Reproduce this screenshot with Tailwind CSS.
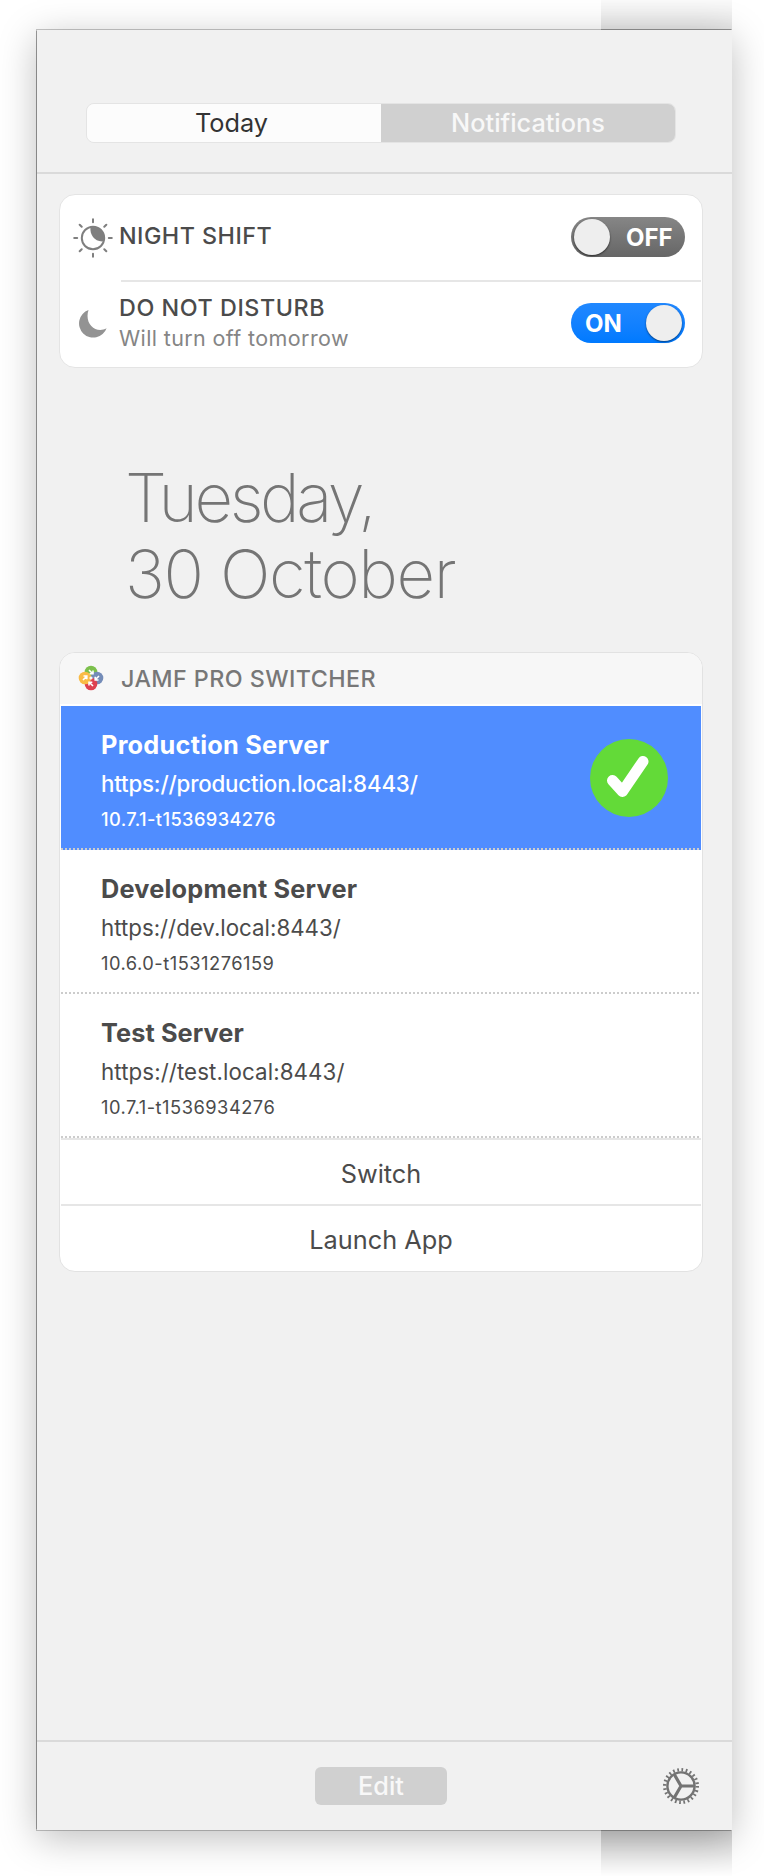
<!DOCTYPE html>
<html lang="en">
<head>
<meta charset="utf-8">
<title>Notification Center</title>
<script src="https://cdn.jsdelivr.net/npm/@tailwindcss/browser@4"></script>
</head>
<body class="bg-white">
<div class="relative w-[764px] h-[1876px] overflow-hidden pt-[30px] pl-[37px] font-['Inter',sans-serif] text-[#4b4b4b] whitespace-nowrap">
  <!-- shadow overlap above and below the panel -->
  <div class="absolute left-[601px] top-0 w-[131px] h-[30px] border-b border-black/25 bg-linear-to-b from-black/2 to-black/10"></div>
  <div class="absolute left-[601px] top-[1830px] w-[131px] h-[46px] border-t border-black/25 bg-linear-to-b from-black/18 to-black/0"></div>

  <main class="relative w-[695px] h-[1800px] bg-[#f1f1f1] flex flex-col shadow-[-1px_-1px_0_0_rgba(0,0,0,0.22),-1px_1px_0_0_rgba(0,0,0,0.22),0_8px_36px_rgba(0,0,0,0.26)]">
    <header class="h-[144px] shrink-0 border-b-2 border-[#dadada] pt-[73px] pl-[49px]">
      <div class="flex w-[590px] h-[40px] rounded-[8px] border border-[#e4e4e4] overflow-hidden text-[25.3px] leading-[37px]">
        <div class="w-[294px] bg-[#fcfcfc] text-center text-[#333] pr-[5px]">Today</div>
        <div class="flex-1 bg-[#d0d0d0] text-center text-[#f8f8f8] font-medium">Notifications</div>
      </div>
    </header>

    <section class="mt-[20px] ml-[22px] w-[644px] h-[174px] rounded-[16px] border border-[#e4e4e4] bg-white px-px">
      <div class="flex h-[85px]">
        <svg class="ml-[12px] mt-[23px] w-[40px] h-[40px]" viewBox="0 0 40 40" fill="none" stroke="#7f7f7f" stroke-width="2" stroke-linecap="round">
          <circle cx="20" cy="20" r="11.2"/>
          <path d="M17.500 9C16.500 17 22 24.500 31 23.300A11.200 11.200 0 0 0 17.500 9Z" fill="#7f7f7f" stroke="none"/>
          <path d="M20 1.200v3M20 35.800v3M1.200 20h3M35.800 20h3M6.700 6.700l2 2M31.300 31.300l2 2M6.700 33.300l2-2M31.300 8.700l2-2"/>
        </svg>
        <div class="ml-[6px] mt-[25px] text-[23.3px] leading-[32px] font-medium tracking-[0.48px]">NIGHT SHIFT</div>
        <div class="ml-auto mr-[16px] mt-[22px] w-[114px] h-[40px] rounded-full bg-linear-to-b from-[#868686] to-[#666] flex p-[2px] text-white font-bold text-[24px] leading-[37px]">
          <div class="w-[36px] h-[36px] rounded-full bg-[#eee] shadow-[0_1px_2px_rgba(0,0,0,0.6)] ml-[1px]"></div>
          <span class="ml-[16px]">OFF</span>
        </div>
      </div>
      <div class="ml-[60px] h-[2px] bg-[#e6e6e6]"></div>
      <div class="flex h-[85px]">
        <svg class="ml-[17px] mt-[27px] w-[30px] h-[30px]" viewBox="0 0 30 30" fill="#939393"><path d="M10.500 1A14.200 14.200 0 1 0 28.600 19.200C18 25 6 15 10.500 1Z"/></svg>
        <div class="ml-[11px] mt-[10px]">
          <div class="text-[23.3px] leading-[32px] font-medium tracking-[0.57px]">DO NOT DISTURB</div>
          <div class="text-[21.5px] leading-[28px] text-[#858585] tracking-[0.38px]">Will turn off tomorrow</div>
        </div>
        <div class="ml-auto mr-[16px] mt-[21px] w-[114px] h-[40px] rounded-full bg-linear-to-b from-[#2088ff] to-[#007aff] flex p-[2px] text-white font-bold text-[24px] leading-[37px]">
          <span class="ml-[12px]">ON</span>
          <div class="ml-auto mr-px w-[36px] h-[36px] rounded-full bg-[#eee] shadow-[0_1px_2px_rgba(0,0,0,0.5)]"></div>
        </div>
      </div>
    </section>

    <h1 class="mt-[92px] ml-[88px] text-[67px] leading-[76px] font-[250] text-[#757575]"><span class="tracking-[-3.4px]">Tuesday,</span><br><span class="tracking-[-1.4px]">30 October</span></h1>

    <section class="mt-[40px] ml-[22px] w-[644px] h-[620px] rounded-[16px] border border-[#e2e2e2] bg-white overflow-hidden">
      <div class="h-[51px] bg-[#f7f7f7] flex items-center">
        <svg class="ml-[18px] -mt-px w-[26px] h-[26px]" viewBox="0 0 26 26">
          <circle cx="13" cy="7" r="6.300" fill="#7cc04c"/><circle cx="19" cy="13" r="6.300" fill="#748cb8"/><circle cx="13" cy="19" r="6.300" fill="#de4150"/><circle cx="7" cy="13" r="6.300" fill="#f9bb45"/>
          <circle cx="13" cy="13" r="1.600" fill="#f7f7f7"/>
          <g fill="none" stroke="#fff" stroke-width="1.600"><path d="M11 5L14.500 8.500M15 5.500V8.800H11.700"/><path d="M21 11L17.500 14.500M17.200 11.700V15H20.500"/><path d="M15 21L11.500 17.500M11 20.500V17.200H14.300"/><path d="M5 15L8.500 11.500M5.500 11H8.800V14.300"/></g>
        </svg>
        <div class="ml-[17px] text-[23.3px] leading-[32px] font-medium text-[#777] tracking-[0.43px]">JAMF PRO SWITCHER</div>
      </div>
      <div class="h-[2px]"></div>
      <div class="relative mx-px h-[144px] bg-[#508dff] text-white pl-[40px] pt-[21px] flex">
        <div>
          <div class="text-[25.3px] leading-[36px] font-bold tracking-[0.25px]">Production Server</div>
          <div class="mt-px text-[22.3px] leading-[40px] font-medium tracking-[-0.18px]">https://production.local:8443/</div>
          <div class="-mt-px text-[18.3px] leading-[32px] font-medium tracking-[0.37px]">10.7.1-t1536934276</div>
        </div>
        <svg class="ml-auto mr-[33px] mt-[12px] w-[78px] h-[78px]" viewBox="0 0 78 78" fill="none"><circle cx="39" cy="39" r="39" fill="#63da38"/><path d="M22.500 41.500L32.500 52.500L53 22.500" stroke="#fff" stroke-width="11" stroke-linecap="round" stroke-linejoin="round"/></svg>
        <div class="absolute left-0 right-0 bottom-0 h-[2px] bg-[repeating-linear-gradient(90deg,#ccc_0_2px,transparent_2px_4px)]"></div>
      </div>
      <div class="relative mx-px h-[144px] pl-[40px] pt-[21px]">
        <div class="text-[25.3px] leading-[36px] font-bold tracking-[0.2px]">Development Server</div>
        <div class="mt-px text-[22.3px] leading-[40px]">https://dev.local:8443/</div>
        <div class="-mt-px text-[18.3px] leading-[32px] tracking-[0.5px]">10.6.0-t1531276159</div>
        <div class="absolute left-0 right-0 bottom-0 h-[2px] bg-[repeating-linear-gradient(90deg,#ccc_0_2px,transparent_2px_4px)]"></div>
      </div>
      <div class="relative mx-px h-[144px] pl-[40px] pt-[21px]">
        <div class="text-[25.3px] leading-[36px] font-bold tracking-[0.1px]">Test Server</div>
        <div class="mt-px text-[22.3px] leading-[40px] tracking-[0.1px]">https://test.local:8443/</div>
        <div class="-mt-px text-[18.3px] leading-[32px] tracking-[0.5px]">10.7.1-t1536934276</div>
        <div class="absolute left-0 right-0 bottom-0 h-[2px] bg-[repeating-linear-gradient(90deg,#ccc_0_2px,transparent_2px_4px)]"></div>
      </div>
      <div class="mx-px h-[66px] border-t-2 border-[#e6e6e6] text-center text-[25.3px] leading-[68px]">Switch</div>
      <div class="mx-px h-[66px] border-t-2 border-[#e6e6e6] text-center text-[25.3px] leading-[68px]">Launch App</div>
    </section>

    <footer class="mt-auto h-[90px] shrink-0 border-t-2 border-[#dadada] flex">
      <div class="ml-[278px] mt-[25px] w-[132px] h-[38px] rounded-[6px] bg-[#d0d0d0] text-center text-[#f8f8f8] text-[25.3px] leading-[37px] font-medium">Edit</div>
      <svg class="ml-auto mr-[33px] mt-[26px] w-[36px] h-[36px]" viewBox="0 0 36 36" fill="none" stroke="#737373"><circle cx="18" cy="18" r="16.300" stroke-width="3.400" stroke-dasharray="1.700 2.567"/><circle cx="18" cy="18" r="13.600" stroke-width="2.400"/><path d="M18 18H31.500M18 18L11.200 6.300M18 18L11.200 29.700" stroke-width="3.200"/></svg>
    </footer>
  </main>
</div>
</body>
</html>
